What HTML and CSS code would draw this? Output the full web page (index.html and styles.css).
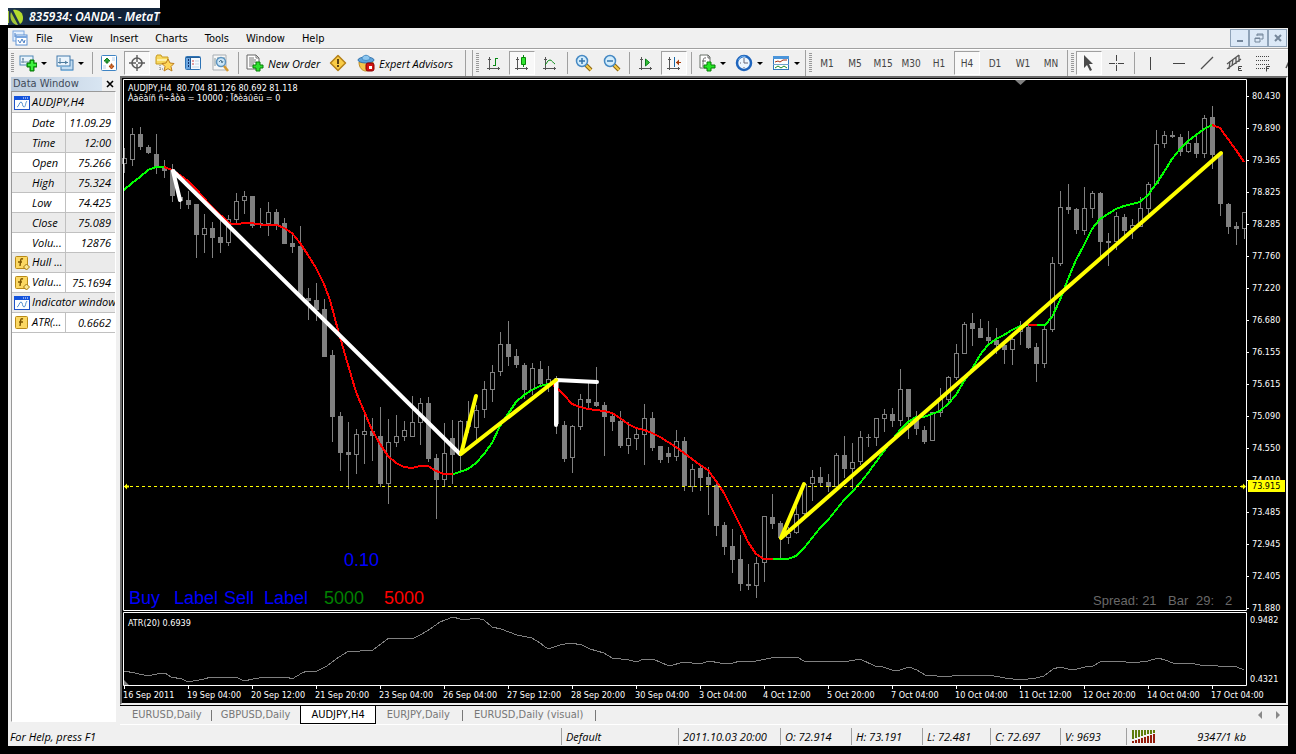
FILE: index.html
```html
<!DOCTYPE html>
<html lang="en">
<head>
  <meta charset="UTF-8" />
  <meta name="viewport" content="width=device-width, initial-scale=1.0"/>
  <title>835934: OANDA - MetaTrader</title>
  <link rel="stylesheet" href="styles.css">
</head>
<body>
  <div class="caption">
    <svg width="16" height="16" viewBox="0 0 16 16"><path d="M0 2v12" stroke="#a4c639" stroke-width="2"/><path d="M5 1c6-1 10 3 10 8 0 3-1 5-3 6z" fill="#b5dc2e"/><path d="M3 3l7 13c-6 0-9-7-7-13z" fill="#a4c639"/></svg>
    <span>835934: OANDA - MetaT</span>
  </div>

  <div class="window">
    <!-- Menu -->
    <header class="menubar">
      <svg class="menu-icon" width="16" height="16" viewBox="0 0 16 16"><rect x="1" y="1" width="11" height="10" fill="#e5f0fd" stroke="#7aa6df"/><rect x="4" y="5" width="11" height="10" fill="#fff" stroke="#5d90d2"/><path d="M4 7h11" stroke="#7aa6df" stroke-width="2"/><path d="M6 10l2 3 2-4 2 4 1-3M3 3v4" fill="none" stroke="#4b7fc4"/></svg>
      <nav>
        <a href="#">File</a>
        <a href="#">View</a>
        <a href="#">Insert</a>
        <a href="#">Charts</a>
        <a href="#">Tools</a>
        <a href="#">Window</a>
        <a href="#">Help</a>
      </nav>
      <div class="win-buttons">
        <button aria-label="Minimize"><svg width="12" height="12" viewBox="0 0 12 12"><path d="M3 9h6" stroke="#75879b" stroke-width="2"/></svg></button>
        <button aria-label="Restore"><svg width="12" height="12" viewBox="0 0 12 12"><path d="M4 4V2h6v5H8M4 3h6M2 6h5v4H2zM2 6.500h5" fill="none" stroke="#75879b"/></svg></button>
        <button aria-label="Close"><svg width="12" height="12" viewBox="0 0 12 12"><path d="M3 3l6 6M9 3l-6 6" stroke="#75879b" stroke-width="2"/></svg></button>
      </div>
    </header>

    <!-- Toolbars -->
    <div class="toolbar">
      <div class="group group-main">
        <i class="grip"></i>
        <button class="tool drop" aria-label="New chart"><svg width="18" height="18" viewBox="0 0 18 18"><rect x="1" y="2" width="13" height="9" fill="#eaf4fc" stroke="#4f87b5"/><path d="M4 4v5M2 8h10M3 5h2" stroke="#6a8ba5"/><path d="M8 9h3V6h4v3h3v4h-3v4h-4v-4H8z" fill="#18b818" stroke="#087808"/><path d="M9 11h8M13 7v9" stroke="#3ff03f" stroke-width="2"/></svg></button>
        <button class="tool drop" aria-label="Profiles"><svg width="18" height="18" viewBox="0 0 18 18"><rect x="5" y="6" width="12" height="10" fill="#c3def3" stroke="#447bab"/><rect x="1" y="2" width="13" height="10" fill="#eaf4fc" stroke="#447bab"/><path d="M4 4v6M2 8.500h10M9 7l2 1.500-2 1.500" fill="none" stroke="#4f7d9f"/><path d="M1 12.500h13M5 16.500h12" stroke="#7eb2da"/></svg></button>
        <i class="sep"></i>
        <button class="tool" aria-label="Market Watch"><svg width="18" height="18" viewBox="0 0 18 18"><rect x="1.500" y="1.500" width="15" height="15" rx="1" fill="#fff" stroke="#3f84c4"/><path d="M4 7l3-3 3 3H8v2H6V7z" fill="#25a535" stroke="#167a22"/><path d="M9 12l2.500 3 2.500-3h-2v-2h-1v2z" fill="#e07135" stroke="#a8480f"/><path d="M12 4h3M12 6h3M3 12h3M3 14h3" stroke="#b9d2ea"/></svg></button>
        <button class="tool pressed" aria-label="Data Window"><svg width="18" height="18" viewBox="0 0 18 18"><circle cx="9" cy="9" r="5" fill="none" stroke="#5c5c5c" stroke-width="1.600"/><path d="M9 1v7M9 10v7M1 9h7M10 9h7" stroke="#5c5c5c" stroke-width="1.400"/></svg></button>
        <button class="tool" aria-label="Navigator"><svg width="20" height="18" viewBox="0 0 20 18"><path d="M1 3l1-2h4l1 2h6v7H1z" fill="#f7d75d" stroke="#c79b22"/><path d="M2 5h10v2H2z" fill="#fdf0a6"/><path d="M5 11v5M5 15h4" stroke="#777" stroke-dasharray="1 1"/><path d="M13 5l2 4 4 .5-3 3 1 4.500-4-2.300L9 17l1-4.500-3-3 4-.5z" fill="#ffd75a" stroke="#bd7d1c"/></svg></button>
        <button class="tool" aria-label="Terminal"><svg width="18" height="18" viewBox="0 0 18 18"><rect x="1.500" y="2.500" width="15" height="13" rx="1" fill="#f6fafe" stroke="#2d73b5"/><path d="M2 3h4v12H2z" fill="#6aa4de"/><path d="M6.500 3v12M2 3.500h14" stroke="#265f99"/><path d="M4 6h1M4 9h1M4 12h1" stroke="#102f67" stroke-width="2"/><path d="M8 7h2M8 10h2" stroke="#d04040"/><path d="M11 7h4M11 10h4M8 13h7" stroke="#c3d6e7"/></svg></button>
        <button class="tool" aria-label="Strategy Tester"><svg width="18" height="18" viewBox="0 0 18 18"><path d="M1 1h13v15H1z" fill="#f7f7f7" stroke="#a7adb2"/><path d="M3 4v8M6 3v5M12 3v4" stroke="#889999"/><circle cx="9" cy="8" r="4.500" fill="#cbe6f7" stroke="#5d94c0" stroke-width="1.500"/><path d="M7 8l2-2 1 3 1-2" fill="none" stroke="#527995"/><path d="M12 12l4 5" stroke="#d59a32" stroke-width="2.500"/></svg></button>
        <i class="sep"></i>
        <button class="tool text new-order"><svg width="18" height="18" viewBox="0 0 18 18"><path d="M1 1h9l3 3v11H1z" fill="#fff" stroke="#666"/><path d="M10 1v3h3M3 4h5M3 6h7M3 8h7M3 10h5M3 12h4" fill="none" stroke="#777"/><path d="M7 11h3V8h4v3h3v3h-3v3h-4v-3H7z" fill="#2fe22f" stroke="#087c08"/></svg>New Order</button>
        <button class="tool" aria-label="MetaEditor"><svg width="18" height="18" viewBox="0 0 18 18"><path d="M9 1.500L16.500 9 9 16.500 1.500 9z" fill="#f9cc45" stroke="#b58119" stroke-width="1.500" stroke-linejoin="round"/><path d="M9 5v5M9 11v2" stroke="#5d4212" stroke-width="2"/></svg></button>
        <button class="tool text experts"><svg width="18" height="18" viewBox="0 0 18 18"><path d="M2 8c0 12 14 12 14 0z" fill="#f3c54a" stroke="#bd8c24"/><ellipse cx="9" cy="6" rx="8" ry="3" fill="#5fa5dc" stroke="#3473ad"/><path d="M5 5c0-5 8-5 8 0-2 2-6 2-8 0z" fill="#8cc6ef" stroke="#4b8fc6"/><rect x="9" y="9" width="8" height="8" rx="2" fill="#d21313" stroke="#8c0000"/><path d="M12 12h3v3h-3z" fill="#fff"/></svg>Expert Advisors</button>
      </div>

      <div class="group group-charts">
        <i class="grip"></i>
        <button class="tool" aria-label="Bar Chart"><svg width="18" height="18" viewBox="0 0 18 18"><path class="axis" d="M4.500 3v13M2 14.500h13M3 5.500h3M13.500 13v3"/><path class="up" d="M10.500 4v8M10 4.500h3M8 11.500h3"/></svg></button>
        <button class="tool pressed" aria-label="Candlesticks"><svg width="18" height="18" viewBox="0 0 18 18"><path class="axis" d="M4.500 3v13M2 14.500h13M3 5.500h3M13.500 13v3"/><path class="up" d="M10.500 1v12"/><path d="M8.500 3.500h4v7h-4z" fill="#32e532" stroke="#078707"/></svg></button>
        <button class="tool" aria-label="Line Chart"><svg width="18" height="18" viewBox="0 0 18 18"><path class="axis" d="M4.500 3v13M2 14.500h13M3 5.500h3M13.500 13v3"/><path class="up" d="M4 11c2-1 2-5 5-5 2 0 3 3 5 4"/></svg></button>
        <i class="sep"></i>
        <button class="tool" aria-label="Zoom In"><svg width="18" height="18" viewBox="0 0 18 18"><path d="M11 11l5 5" stroke="#8d6710" stroke-width="4"/><path d="M11 11l5 5" stroke="#f4ca48" stroke-width="2"/><circle cx="7" cy="7" r="5.500" fill="#d3edfc" stroke="#4689c3" stroke-width="1.500"/><path d="M4 7h6M7 4v6" stroke="#3474ac" stroke-width="1.500"/></svg></button>
        <button class="tool" aria-label="Zoom Out"><svg width="18" height="18" viewBox="0 0 18 18"><path d="M11 11l5 5" stroke="#8d6710" stroke-width="4"/><path d="M11 11l5 5" stroke="#f4ca48" stroke-width="2"/><circle cx="7" cy="7" r="5.500" fill="#d3edfc" stroke="#4689c3" stroke-width="1.500"/><path d="M4 7h6" stroke="#3474ac" stroke-width="1.500"/></svg></button>
        <i class="sep"></i>
        <button class="tool" aria-label="Auto Scroll"><svg width="18" height="18" viewBox="0 0 18 18"><path class="axis" d="M4.500 3v13M2 14.500h13M3 5.500h3M13.500 13v3"/><path d="M8.500 5v7l4-3.500z" fill="#35c335" stroke="#0a7d1d"/></svg></button>
        <button class="tool pressed" aria-label="Chart Shift"><svg width="18" height="18" viewBox="0 0 18 18"><path class="axis" d="M4.500 3v13M2 14.500h13M3 5.500h3M13.500 13v3"/><path d="M9.500 3v10" stroke="#1668a8"/><path d="M11 8.500h5" stroke="#a33c0b"/><path d="M11 8.500l3-3v6z" fill="#a33c0b"/></svg></button>
        <i class="sep"></i>
        <button class="tool drop" aria-label="Indicators"><svg width="18" height="18" viewBox="0 0 18 18"><path d="M2 1h8l2 2v11H2z" fill="#fff" stroke="#697169"/><path d="M8 4c-3-1-3 2-3 9M4 7h4M10 1v3h2" fill="none" stroke="#666"/><path d="M6 11h3V8h4v3h4v3h-4v3H9v-3H6z" fill="#23e623" stroke="#087d08"/></svg></button>
        <button class="tool drop" aria-label="Periods"><svg width="18" height="18" viewBox="0 0 18 18"><circle cx="9" cy="9" r="7" fill="#edf7ff" stroke="#1f65bd" stroke-width="2.500"/><path d="M9 4v5h4M5 9h1M9 13v1" fill="none" stroke="#666677"/><path d="M3.500 6a6 6 0 0 1 7-3.500" fill="none" stroke="#72b3ee"/></svg></button>
        <button class="tool drop" aria-label="Templates"><svg width="18" height="18" viewBox="0 0 18 18"><rect x="1.500" y="2.500" width="15" height="13" fill="#fff" stroke="#2f78bd"/><path d="M1 3.500h16" stroke="#4b95da" stroke-width="3"/><path d="M1 10.500h16" stroke="#6fa2cd"/><path d="M3 8l3-1 2 1 3-2h4" fill="none" stroke="#a72e12"/><path d="M3 14l3-2 3 2 3-2 3 2" fill="none" stroke="#198c26"/></svg></button>
      </div>

      <div class="group group-periods">
        <i class="grip"></i>
        <button class="tool">M1</button>
        <button class="tool">M5</button>
        <button class="tool">M15</button>
        <button class="tool">M30</button>
        <button class="tool">H1</button>
        <button class="tool pressed">H4</button>
        <button class="tool">D1</button>
        <button class="tool">W1</button>
        <button class="tool">MN</button>
      </div>

      <div class="group group-lines">
        <i class="grip"></i>
        <button class="tool pressed" aria-label="Cursor"><svg width="18" height="18" viewBox="0 0 18 18"><path d="M4 1v13l3-3 3 6 2-1-3-6h4z" fill="#4a4a4a"/></svg></button>
        <button class="tool" aria-label="Crosshair"><svg width="18" height="18" viewBox="0 0 18 18"><path class="ink" d="M8.500 1v6M8.500 11v6M1 9.500h6M10 9.500h6M8 9.500h1"/></svg></button>
        <i class="sep"></i>
        <button class="tool" aria-label="Vertical Line"><svg width="18" height="18" viewBox="0 0 18 18"><path class="ink" d="M8.500 3v13"/></svg></button>
        <button class="tool" aria-label="Horizontal Line"><svg width="18" height="18" viewBox="0 0 18 18"><path class="ink" d="M3 9.500h12"/></svg></button>
        <button class="tool" aria-label="Trendline"><svg width="18" height="18" viewBox="0 0 18 18"><path d="M3 15L15 3" stroke="#4f4f4f" stroke-width="1.300"/></svg></button>
        <button class="tool" aria-label="Equidistant Channel"><svg width="18" height="18" viewBox="0 0 18 18"><path d="M1 10L13 1M1 15L15 5M4 7l-1 8M7 5l-1 7M10 3l0 7M13 1l0 7" fill="none" stroke="#555" stroke-width="1.300"/><path class="ink" d="M16 12.500h-3.500v4H16M12 14.500h3"/></svg></button>
        <button class="tool" aria-label="Fibonacci"><svg width="18" height="18" viewBox="0 0 18 18"><path class="ink" stroke-dasharray="1 1" d="M2 2.500h14M2 6.500h14M2 10.500h14M2 14.500h9"/><path class="ink" d="M16 12.500h-3.500v5M12 14.500h3"/></svg></button>
        <button class="tool" aria-label="Text"><svg width="18" height="18" viewBox="0 0 18 18"><path d="M4 14L9 3l5 11M6 10h6" fill="none" stroke="#555" stroke-width="1.500"/></svg></button>
      </div>
    </div>

    <main class="work">
      <aside class="data-window">
        <div class="data-head"><h2>Data Window</h2><button aria-label="Close Data Window"><svg width="8" height="8" viewBox="0 0 8 8"><path d="M1 1l6 6M7 1L1 7" stroke="#000" stroke-width="1.600"/></svg></button></div>
        <div class="data-body">
          <table>
            <colgroup><col class="col-name"><col></colgroup>
            <tr><th colspan="2"><svg width="16" height="14" viewBox="0 0 16 14"><rect x=".5" y=".5" width="15" height="13" fill="#fff" stroke="#1e52c8"/><path d="M0 0h16v4H0z" fill="#1453dc"/><path d="M9 2h1M11 2h1M13 2h1" stroke="#fff"/><path d="M3 11c2 0 2-5 4-5s1 5 3 5 1-4 3-6" fill="none" stroke="#5591cf"/></svg>AUDJPY,H4</th></tr>
            <tr><th class="plain">Date</th><td>11.09.29</td></tr>
            <tr><th class="plain">Time</th><td>12:00</td></tr>
            <tr><th class="plain">Open</th><td>75.266</td></tr>
            <tr><th class="plain">High</th><td>75.324</td></tr>
            <tr><th class="plain">Low</th><td>74.425</td></tr>
            <tr><th class="plain">Close</th><td>75.089</td></tr>
            <tr><th class="plain">Volu...</th><td>12876</td></tr>
            <tr><th><svg width="16" height="14" viewBox="0 0 16 14"><rect x="1.500" y=".5" width="12" height="12" rx="1" fill="#fbd864" stroke="#b98a18"/><path d="M9 3c-3-1-2 1-3 7M4 6h4" fill="none" stroke="#805800" stroke-width="1.400"/><path d="M12.500 8l3 3-3 3-3-3z" fill="#fce68d" stroke="#a3760e"/></svg>Hull ...</th><td></td></tr>
            <tr><th><svg width="16" height="14" viewBox="0 0 16 14"><rect x="1.500" y=".5" width="12" height="12" rx="1" fill="#fbd864" stroke="#b98a18"/><path d="M9 3c-3-1-2 1-3 7M4 6h4" fill="none" stroke="#805800" stroke-width="1.400"/><path d="M12.500 8l3 3-3 3-3-3z" fill="#fce68d" stroke="#a3760e"/></svg>Valu...</th><td>75.1694</td></tr>
            <tr><th colspan="2"><svg width="16" height="14" viewBox="0 0 16 14"><rect x=".5" y=".5" width="15" height="13" fill="#fff" stroke="#1e52c8"/><path d="M0 0h16v4H0z" fill="#1453dc"/><path d="M9 2h1M11 2h1M13 2h1" stroke="#fff"/><path d="M3 11c2 0 2-5 4-5s1 5 3 5 1-4 3-6" fill="none" stroke="#5591cf"/></svg>Indicator window</th></tr>
            <tr><th><svg width="16" height="14" viewBox="0 0 16 14"><rect x="1.500" y=".5" width="12" height="12" rx="1" fill="#fbd864" stroke="#b98a18"/><path d="M9 3c-3-1-2 1-3 7M5 6h4" fill="none" stroke="#805800" stroke-width="1.400"/></svg>ATR(...</th><td>0.6662</td></tr>
          </table>
        </div>
      </aside>

      <section class="chart-area">
        <div class="chart-panel">
          <svg class="chart" viewBox="122 78 1164 625" role="img" aria-label="AUDJPY H4 chart">
            <g id="candles" class="candles"></g>
            <g class="hull">
              <polyline class="rise" points="124,190 132,183 140,177 148,170 156,167 164,167"/>
              <polyline class="fall" points="164,167 172,170 180,175 188,181 196,189 210,205 228,222 232,224 250,223 265,225 277,225 284,228 292,233 300,243 308,255 316,268 324,284 330,300 338,330 346,358 356,392 364,411 372,430 380,444 388,456 396,463 404,467 412,468 420,466 428,466 436,471 444,474 453,474"/>
              <polyline class="rise" points="453,474 460,472 468,469 476,463 484,454 492,443 500,426 508,414 516,402 524,395 532,390 540,386 548,384 553,384"/>
              <polyline class="fall" points="553,385 556,387 564,395 572,404 580,407 588,409 596,410 604,411 612,413 620,418 628,424 636,428 644,430 652,433 660,437 668,442 676,447 684,453 692,459 700,465 708,470 716,481 724,493 732,509 740,525 748,542 756,554 764,559 773,559"/>
              <polyline class="rise" points="773,559 788,559 796,556 804,548 812,538 820,528 828,520 836,510 844,500 852,492 860,483 868,473 876,462 884,451 892,440 900,430 908,422 916,417 924,417 932,414 940,411 948,404 956,395 964,381 972,369 980,355 988,345 996,339 1004,335 1012,330 1020,326 1028,325"/>
              <polyline class="fall" points="1028,325 1037,325"/>
              <polyline class="rise" points="1037,325 1045,325 1052,317 1060,300 1068,279 1076,260 1084,245 1092,229 1100,219 1108,214 1116,209 1124,206 1132,204 1140,202 1148,195 1156,184 1164,172 1172,159 1180,149 1188,141 1196,135 1204,129 1212,125"/>
              <polyline class="fall" points="1212,125 1220,128 1228,139 1236,150 1244,162"/>
            </g>

            <!-- orders -->
            <g class="orders">
              <path class="sell" d="M180 200L173 171L460 454M597 382L556 380V425"/>
              <path class="buy" d="M476 396L461 454L556 380M804 484L781 538L1221 153"/>
            </g>

            <path class="bid" d="M124 486.500H1246"/>
            <path class="bid-end" d="M124 486.500l3-3v2h2v2h-2v2zM1246 486.500l-3-3v2h-2v2h2v2z"/>
            <path class="marker" d="M1015 80h11l-5.500 5zM124 680l5 5h-5z"/>
            <path class="frame" d="M123.500 610.500V79.500H1246.500V610.500ZM123.500 685.500V612.500H1246.500V685.500Z"/>
            <polyline class="atr" points="124,671 135,673 148,676 157,674 165,673 171,677 182,679 188,682 204,679 211,677 224,677 238,678 244,681 253,679 265,677 287,677 292,679 302,673 307,671 317,671 327,666 339,657 349,651 356,652 364,650 373,650 381,644 389,638 399,638 407,639 414,638 422,634 430,629 440,622 453,617 460,619 470,619 476,618 484,620 492,627 501,629 517,635 532,638 540,643 548,649 560,645 571,643 582,645 590,649 604,653 612,658 629,660 637,662 641,660 653,659 669,666 684,662 700,664 709,661 720,663 733,663 740,661 756,661 771,658 797,657 804,661 844,662 860,659 875,666 883,667 892,670 900,670 909,667 917,670 925,675 948,677 956,675 964,676 989,675 1005,678 1021,680 1036,678 1044,676 1053,669 1060,667 1068,669 1077,669 1085,667 1093,666 1100,662 1118,661 1133,663 1148,661 1158,658 1165,660 1173,663 1190,663 1200,665 1218,666 1237,667 1244,670"/>

            <g id="axis-labels" class="labels"></g>
            <rect x="1248" y="480" width="37" height="12" fill="#ffff00"/>
            <g class="labels">
              <text x="128" y="91" xml:space="preserve">AUDJPY,H4  80.704 81.126 80.692 81.118</text>
              <text x="128" y="101">Ààëàíñ ñ÷åòà = 10000 ; Ïðèáûëü = 0</text>
              <text x="128" y="626">ATR(20) 0.6939</text>
              <text x="1250" y="623">0.9482</text>
              <text x="1250" y="682">0.4321</text>
              <text class="bid-label" x="1252" y="489">73.915</text>
            </g>
            <g class="objects">
              <text x="344" y="566" fill="#0000ff">0.10</text>
              <text x="129" y="604" fill="#0000ff">Buy</text>
              <text x="174" y="604" fill="#0000ff">Label</text>
              <text x="224" y="604" fill="#0000ff">Sell</text>
              <text x="264" y="604" fill="#0000ff">Label</text>
              <text x="324" y="604" fill="#008000">5000</text>
              <text x="384" y="604" fill="#ff0000">5000</text>
            </g>
            <g class="spread">
              <text x="1093" y="605">Spread: 21</text>
              <text x="1168" y="605">Bar</text>
              <text x="1196" y="605">29:</text>
              <text x="1225" y="605">2</text>
            </g>
          </svg>
        </div>
        <nav class="tabs">
          <a href="#">EURUSD,Daily</a>
          <a href="#">GBPUSD,Daily</a>
          <a href="#" class="active">AUDJPY,H4</a>
          <a href="#">EURJPY,Daily</a>
          <a href="#">EURUSD,Daily (visual)</a>
          <div class="tab-scroll">
            <button aria-label="Previous tabs"><svg width="4" height="8" viewBox="0 0 4 8"><path d="M4 0v8L0 4z" fill="#888"/></svg></button>
            <button aria-label="Next tabs"><svg width="4" height="8" viewBox="0 0 4 8"><path d="M0 0v8l4-4z" fill="#888"/></svg></button>
          </div>
        </nav>
      </section>
    </main>

    <footer class="status">
      <span>For Help, press F1</span>
      <span>Default</span>
      <span>2011.10.03 20:00</span>
      <span>O: 72.914</span>
      <span>H: 73.191</span>
      <span>L: 72.481</span>
      <span>C: 72.697</span>
      <span>V: 9693</span>
      <span class="traffic"><svg width="24" height="13" viewBox="0 0 24 13"><path d="M1 0v9M4 0v8M7 0v7M10 0v6M13 0v5M16 0v4M19 0v4M22 0v3" stroke="#5f7d0b" stroke-width="2"/><path d="M1 11v2M4 10v3M7 9v4M10 8v5M13 7v6M16 6v7M19 5v8M22 4v9" stroke="#961c0b" stroke-width="2"/></svg>9347/1 kb</span>
    </footer>
  </div>

  <script src="chart.js"></script>
</body>
</html>
```
FILE: styles.css
```css
* { box-sizing: border-box; margin: 0; padding: 0; }
body {
  background: #000;
  color: #000;
  font-family: "DejaVu Sans Condensed", "DejaVu Sans", sans-serif;
  font-size: 11px;
}
a { color: inherit; text-decoration: none; }
button {
  border: none;
  background: none;
  color: inherit;
  font: inherit;
}
svg { display: block; flex: none; }

.caption {
  display: flex;
  align-items: center;
  gap: 5px;
  width: 160px;
  height: 25px;
  border-top: 8px solid #fff;
  border-left: 8px solid #fff;
  background: linear-gradient(to right, #20384f, #0c1d33 30%, #13253b);
  color: #fff;
  font: italic 600 12px "Noto Sans", sans-serif;
  white-space: nowrap;
}
.window {
  margin: 3px 8px 8px;
  background: #f0f0f0;
}

/* menu */
.menubar {
  display: flex;
  align-items: center;
  height: 21px;
  padding-left: 4px;
  border-bottom: 1px solid #a0a0a0;
}
.menubar nav {
  display: flex;
  gap: 17px;
  margin-left: 8px;
  flex: 1;
}
.win-buttons { display: flex; padding-right: 1px; }
.win-buttons button {
  display: flex;
  align-items: center;
  justify-content: center;
  width: 19px;
  height: 18px;
  border: 1px solid #8fa3b8;
  background: #dce9f7;
}

/* toolbars */
.toolbar {
  display: flex;
  height: 27px;
  border-top: 1px solid #fff;
  overflow: hidden;
}
.group { display: flex; align-items: stretch; flex: none; }
.group-main {
  padding-right: 3px;
  margin-right: 6px;
  border-right: 1px solid #a0a0a0;
}
.group-charts {
  border-left: 1px solid #a0a0a0;
  border-right: 1px solid #a0a0a0;
}
.group-periods {
  padding-right: 2px;
  border-right: 1px solid #a0a0a0;
  color: #444;
  font-size: 10px;
}
.grip {
  width: 3px;
  margin: 3px 1px 3px 3px;
  background: repeating-linear-gradient(#999 0 1px, #f0f0f0 1px 2px);
}
.sep {
  width: 1px;
  margin: 2px 2px 2px 3px;
  background: #a0a0a0;
}
.tool {
  display: flex;
  align-items: center;
  justify-content: center;
  width: 28px;
}
.drop {
  width: 37px;
  justify-content: flex-start;
  gap: 4px;
  padding-left: 4px;
}
.drop::after {
  content: "";
  border: 3px solid transparent;
  border-top-color: #000;
  border-bottom: none;
}
.pressed {
  width: 26px;
  margin: 1px;
  border: 1px solid #fff;
  border-top-color: #a0a0a0;
  border-left-color: #a0a0a0;
  background: #f8f8f8;
}
.text {
  justify-content: flex-start;
  gap: 4px;
  padding-left: 5px;
  font: italic 11px "Open Sans", sans-serif;
  white-space: nowrap;
}
.new-order { width: 83px; }
.experts { width: 110px; }
.axis { fill: none; stroke: #555; }
.up { fill: none; stroke: #078a14; }
.ink { fill: none; stroke: #444; }

/* data window */
.work {
  display: grid;
  grid-template-columns: 112px minmax(0, 1fr);
}
.data-window {
  display: flex;
  flex-direction: column;
  padding: 1px 4px 3px 3px;
}
.data-head {
  display: flex;
  align-items: center;
  justify-content: space-between;
  height: 14px;
  padding-right: 2px;
}
.data-head h2 {
  width: 91px;
  padding-left: 2px;
  background: linear-gradient(to right, #bccbdc, #d8e5f2);
  color: #404b5a;
  font-size: 11px;
  font-weight: normal;
  line-height: 14px;
}
.data-body {
  flex: 1;
  border: 1px solid #fff;
  border-top-color: #999;
  border-left-color: #999;
  background: #fff;
  overflow: hidden;
}
table {
  width: 100%;
  table-layout: fixed;
  border-collapse: collapse;
  font: italic 11px "Open Sans", sans-serif;
}
.col-name { width: 53px; }
th, td {
  height: 20px;
  border-bottom: 1px solid #c0c0c0;
  white-space: nowrap;
  font-weight: normal;
}
th { padding-left: 2px; text-align: left; }
th svg { display: inline-block; margin-right: 2px; vertical-align: middle; }
th.plain { padding-left: 20px; }
td { padding-right: 4px; border-left: 1px solid #c0c0c0; text-align: right; }
tr:nth-child(odd) { background: #ebebeb; }

/* chart */
.chart-panel {
  border: 2px solid #6b6b6b;
  border-right-color: #f0f0f0;
  border-bottom-color: #f0f0f0;
  background: #000;
}
.chart { width: 100%; height: auto; }
.candles { fill: #808080; stroke: none; shape-rendering: crispEdges; }
.candles .hollow { fill: #000; stroke: #808080; }
.hull { fill: none; stroke-width: 2; shape-rendering: crispEdges; }
.rise { stroke: #00ff00; }
.fall { stroke: #ff0000; }
.orders {
  fill: none;
  stroke-width: 4;
  stroke-linecap: round;
  stroke-linejoin: round;
}
.sell { stroke: #fff; }
.buy { stroke: #ffff00; }
.bid { stroke: #ffff00; stroke-dasharray: 3 3; shape-rendering: crispEdges; }
.bid-end { fill: #ffff00; }
.marker { fill: #808080; }
.frame { fill: none; stroke: #fff; }
.tick { stroke: #fff; }
.atr { fill: none; stroke: #808080; shape-rendering: crispEdges; }
.labels { fill: #fff; font-size: 9px; }
.labels .bid-label { fill: #000; }
.objects { font: 18px "Liberation Sans", Arial, sans-serif; }
.spread { fill: #696969; font: 13px "Liberation Sans", Arial, sans-serif; }

/* tabs */
.tabs {
  display: flex;
  align-items: flex-start;
  height: 20px;
  border-top: 1px solid #000;
  border-bottom: 1px solid #fff;
  color: #777;
  font-size: 11px;
}
.tabs a {
  padding: 0 10px 0 9px;
  line-height: 17px;
  background: linear-gradient(#777, #777) right 4px / 1px 11px no-repeat;
}
.tabs a:first-child { padding-left: 12px; }
.tabs .active ~ a { padding: 0 13px 0 11px; }
.tabs a.active {
  padding: 0 10px;
  border: 1px solid #000;
  border-top: none;
  background: #fff;
  color: #000;
}
.tabs a:has(+ .active) { background: none; }
.tab-scroll {
  display: flex;
  gap: 14px;
  margin: 5px 8px 0 auto;
}

/* status bar */
.status {
  display: grid;
  grid-template-columns: minmax(0, 1fr) 117px 102px 71px 71px 68px 70px 66px 162px;
  height: 21px;
  padding: 3px 0 1px;
  font: italic 11px "Open Sans", sans-serif;
}
.status span {
  padding-left: 4px;
  border-left: 1px solid #a0a0a0;
  line-height: 17px;
  white-space: nowrap;
}
.status span:first-child { padding-left: 2px; border-left: none; }
.status .traffic {
  display: flex;
  align-items: center;
  justify-content: space-between;
  padding: 0 42px 0 5px;
}
```
FILE: chart.js
```js
// high, body top, body bottom, low, hollow - one row for each bar
const bars = [
  [148,158,163,173,1],[128,134,159,166,1],[127,134,147,150,0],[145,147,153,154,0],[134,154,167,174,0],
  [160,167,171,178,0],[164,169,196,202,0],[195,197,201,209,0],[191,200,205,209,0],[204,204,235,258,0],
  [214,228,234,253,1],[222,228,238,258,0],[220,237,243,253,0],[215,219,242,246,1],[193,201,219,223,1],
  [191,196,200,214,1],[196,196,226,228,0],[208,223,225,228,0],[202,212,223,236,1],[209,212,225,230,0],
  [218,223,244,244,0],[233,243,247,253,0],[226,246,297,297,0],[288,298,301,320,0],[283,300,310,321,0],
  [299,309,357,357,0],[350,355,417,442,0],[412,416,453,471,0],[422,452,455,489,0],[429,434,454,474,1],
  [414,431,434,464,1],[418,431,436,461,0],[407,436,484,487,0],[419,442,483,504,1],[415,436,442,447,1],
  [421,430,436,441,1],[396,422,436,436,1],[398,403,422,445,1],[397,403,459,462,0],[454,458,480,519,0],
  [423,453,479,486,1],[420,438,455,484,0],[420,421,453,472,1],[401,421,427,433,0],[405,410,427,440,1],
  [381,389,409,418,1],[365,372,389,402,1],[332,344,371,376,1],[321,344,357,366,0],[349,356,365,368,0],
  [363,365,390,399,0],[363,368,389,395,1],[361,369,384,385,0],[366,379,384,392,1],[376,380,424,434,0],
  [421,425,459,462,0],[425,426,457,473,1],[394,399,426,430,1],[383,399,403,408,0],[367,402,406,407,0],
  [402,405,417,456,0],[413,416,422,431,0],[411,421,446,448,0],[422,438,445,454,1],[428,434,438,450,1],
  [404,418,434,465,1],[412,418,448,451,0],[446,446,460,463,0],[447,453,457,463,0],[430,441,456,461,1],
  [437,441,486,491,0],[464,469,486,492,1],[466,468,478,491,0],[467,477,485,515,0],[483,485,526,536,0],
  [522,525,547,555,0],[529,546,560,573,0],[535,559,584,591,0],[564,584,586,590,0],[557,563,585,598,1],
  [516,516,562,582,1],[494,517,524,529,0],[521,523,538,559,0],[527,533,537,544,1],[506,514,532,534,1],
  [483,484,513,517,1],[470,477,483,501,1],[467,477,483,486,0],[474,482,487,492,0],[453,455,486,486,1],
  [436,455,469,478,0],[443,462,468,489,1],[431,437,461,465,1],[434,437,438,447,0],[418,418,437,446,1],
  [409,414,418,432,1],[408,414,421,427,0],[369,389,420,426,1],[389,389,417,439,0],[411,417,429,435,0],
  [426,430,442,444,0],[412,412,440,441,1],[388,399,412,417,1],[376,377,399,402,1],[344,353,377,380,1],
  [322,324,353,354,1],[313,323,329,346,0],[319,328,338,338,0],[321,337,341,345,0],[328,340,345,354,0],
  [343,345,350,364,0],[337,339,349,365,1],[321,327,331,345,1],[325,327,348,349,0],[343,347,364,382,0],
  [326,329,363,368,1],[257,263,329,332,1],[191,207,263,266,1],[184,207,210,214,0],[208,209,230,234,0],
  [187,208,230,235,1],[191,193,208,218,1],[192,193,242,258,0],[233,241,243,266,0],[212,216,241,250,1],
  [214,217,231,236,0],[219,225,228,239,1],[197,208,226,227,1],[182,184,208,214,1],[130,144,183,183,1],
  [131,135,143,148,1],[131,135,137,138,0],[134,137,152,156,0],[131,143,151,153,1],[135,143,154,158,0],
  [115,118,153,158,1],[106,117,155,169,0],[153,154,204,216,0],[203,204,227,234,0],[222,226,229,245,0],
  [212,212,228,239,1]
];

const prices = ["80.430", "79.890", "79.365", "78.825", "78.285", "77.760", "77.220", "76.680", "76.155",
  "75.615", "75.090", "74.550", "74.010", "73.485", "72.945", "72.405", "71.880"];

const dates = ["16 Sep 2011", "19 Sep 04:00", "20 Sep 12:00", "21 Sep 20:00", "23 Sep 04:00", "26 Sep 04:00",
  "27 Sep 12:00", "28 Sep 20:00", "30 Sep 04:00", "3 Oct 04:00", "4 Oct 12:00", "5 Oct 20:00", "7 Oct 04:00",
  "10 Oct 04:00", "11 Oct 12:00", "12 Oct 20:00", "14 Oct 04:00", "17 Oct 04:00"];

let candles = "";
bars.forEach(([high, top, bottom, low, hollow], i) => {
  const x = 124 + i * 8;
  candles += `<rect x="${x}" y="${high}" width="1" height="${low - high}"/>`;
  if (hollow) {
    candles += `<rect class="hollow" x="${x - 1.5}" y="${top + 0.5}" width="4" height="${bottom - top}"/>`;
  } else {
    candles += `<rect x="${x - 2}" y="${top}" width="5" height="${bottom - top}"/>`;
  }
});
document.getElementById("candles").innerHTML = candles;

let labels = "";
prices.forEach((price, i) => {
  const y = 96 + i * 32;
  labels += `<path class="tick" d="M1247 ${y + 0.5}h2"/><text x="1252" y="${y + 3}">${price}</text>`;
});
dates.forEach((date, i) => {
  const x = 124 + i * 64;
  labels += `<path class="tick" d="M${x + 0.5} 686v3"/><text x="${x - 1}" y="698">${date}</text>`;
});
document.getElementById("axis-labels").innerHTML = labels;
```
